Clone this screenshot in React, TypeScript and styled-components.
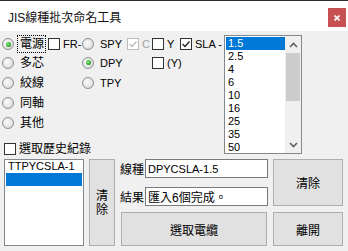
import React from 'react';
import styled, { createGlobalStyle } from 'styled-components';

const GlobalStyle = createGlobalStyle`
  html, body {
    margin: 0;
    padding: 0;
    background: #f0f0f0;
  }
  body {
    font-family: "Liberation Sans", "Noto Sans CJK TC", sans-serif;
    font-size: 11px;
    color: #000;
  }
`;

const sizes = ['1.5', '2.5', '4', '6', '10', '16', '25', '35', '50'];

export default function App() {
  return (
    <>
      <GlobalStyle />
      <Window>
        <TitleBar>
          <Title>JIS線種批次命名工具</Title>
          <CloseButton>
            <svg width="6" height="6" viewBox="0 0 6 6">
              <path d="M0.5 0.5 L5.5 5.5 M5.5 0.5 L0.5 5.5" stroke="#fff" strokeWidth="1.6" />
            </svg>
          </CloseButton>
        </TitleBar>

        <Body>
          <TopRow>
            <LeftColumn>
              <OptionGrid>
                <Cell $col={1} $row={1}><Radio label="電源" checked focused zh /></Cell>
                <Cell $col={2} $row={1}><Check label="FR-" /></Cell>
                <Cell $col={3} $row={1}><Radio label="SPY" /></Cell>
                <Cell $col={4} $row={1}><Check label="C" checked disabled /></Cell>
                <Cell $col={5} $row={1}><Check label="Y" /></Cell>
                <Cell $col={6} $row={1}><Check label="SLA -" checked /></Cell>

                <Cell $col={1} $row={2}><Radio label="多芯" zh /></Cell>
                <Cell $col={3} $row={2}><Radio label="DPY" checked /></Cell>
                <Cell $col={5} $row={2}><Check label="(Y)" /></Cell>

                <Cell $col={1} $row={3}><Radio label="絞線" zh /></Cell>
                <Cell $col={3} $row={3}><Radio label="TPY" /></Cell>

                <Cell $col={1} $row={4}><Radio label="同軸" zh /></Cell>
                <Cell $col={1} $row={5}><Radio label="其他" zh /></Cell>
              </OptionGrid>
              <HistoryToggle>
                <Check label="選取歷史紀錄" zh />
              </HistoryToggle>
            </LeftColumn>

            <SizeList>
              <SizeItems>
                {sizes.map((s, i) => (
                  <ListItem key={s} $selected={i === 0}>{s}</ListItem>
                ))}
              </SizeItems>
              <ScrollBar>
                <ScrollArrow>
                  <svg width="9" height="6" viewBox="0 0 9 6">
                    <path d="M1 5 L4.5 1.5 L8 5" stroke="#606060" strokeWidth="1.6" fill="none" />
                  </svg>
                </ScrollArrow>
                <ScrollThumb />
                <ScrollTrack />
                <ScrollArrow>
                  <svg width="9" height="6" viewBox="0 0 9 6">
                    <path d="M1 1 L4.5 4.5 L8 1" stroke="#606060" strokeWidth="1.6" fill="none" />
                  </svg>
                </ScrollArrow>
              </ScrollBar>
            </SizeList>
          </TopRow>

          <BottomRow>
            <HistoryList>
              <ListItem>TTPYCSLA-1</ListItem>
              <ListItem $selected />
            </HistoryList>
            <VerticalButton>清<br />除</VerticalButton>

            <RightPanel>
              <FieldsRow>
                <Fields>
                  <Field>
                    <FieldLabel>線種</FieldLabel>
                    <TextBox>DPYCSLA-1.5</TextBox>
                  </Field>
                  <Field>
                    <FieldLabel>結果</FieldLabel>
                    <TextBox><Zh>匯入6個完成。</Zh></TextBox>
                  </Field>
                </Fields>
                <ClearButton><Zh>清除</Zh></ClearButton>
              </FieldsRow>
              <ActionsRow>
                <SelectButton><Zh>選取電纜</Zh></SelectButton>
                <ExitButton><Zh>離開</Zh></ExitButton>
              </ActionsRow>
            </RightPanel>
          </BottomRow>
        </Body>
      </Window>
    </>
  );
}

const Radio = ({ label, checked, focused, zh }: { label: string; checked?: boolean; focused?: boolean; zh?: boolean }) => (
  <Option $gap={focused ? 4 : 6}>
    <RadioDot $checked={checked} />
    <OptionText $focused={focused} $zh={zh}>{label}</OptionText>
  </Option>
);

const Check = ({ label, checked, disabled, zh }: { label: string; checked?: boolean; disabled?: boolean; zh?: boolean }) => (
  <Option $gap={3}>
    <CheckBox $disabled={disabled}>
      {checked && (
        <svg width="10" height="10" viewBox="0 0 10 10">
          <path d="M1.5 5 L4 7.5 L8.5 2.5" stroke={disabled ? '#bcbcbc' : '#222'} strokeWidth="1.3" fill="none" />
        </svg>
      )}
    </CheckBox>
    <OptionText $zh={zh} $disabled={disabled}>{label}</OptionText>
  </Option>
);

const Window = styled.div`
  width: 348px;
  height: 251px;
  display: flex;
  flex-direction: column;
  overflow: hidden;
  background: #f0f0f0;
`;

const TitleBar = styled.div`
  height: 31px;
  box-sizing: border-box;
  border-top: 1px solid #2b2b2b;
  background: #fff;
  display: flex;
  align-items: center;
  justify-content: space-between;
  padding-left: 8px;
`;

const Title = styled.div`
  font-size: 12px;
  color: #111;
`;

const CloseButton = styled.div`
  align-self: flex-start;
  margin-top: 7px;
  margin-right: 2px;
  width: 18px;
  height: 19px;
  background: #c75050;
  display: flex;
  align-items: center;
  justify-content: center;
`;

const Body = styled.div`
  display: flex;
  flex-direction: column;
  padding-top: 4px;
`;

const TopRow = styled.div`
  display: flex;
  height: 121px;
`;

const LeftColumn = styled.div`
  width: 224px;
  display: flex;
  flex-direction: column;
`;

const OptionGrid = styled.div`
  margin-left: 2px;
  display: grid;
  grid-template-columns: 46px 34px 45px 25px 28px 44px;
  grid-template-rows: 18px 19px 21px 20px 19px;
`;

const Cell = styled.div<{ $col: number; $row: number }>`
  grid-column: ${p => p.$col};
  grid-row: ${p => p.$row};
  display: flex;
  align-items: center;
  white-space: nowrap;
`;

const Option = styled.div<{ $gap: number }>`
  display: flex;
  align-items: center;
  gap: ${p => p.$gap}px;
`;

const OptionText = styled.span<{ $focused?: boolean; $zh?: boolean; $disabled?: boolean }>`
  font-size: ${p => (p.$zh ? 12 : 11)}px;
  line-height: 14px;
  color: ${p => (p.$disabled ? '#a0a0a0' : '#000')};
  padding: ${p => (p.$focused ? '1px 1px 1px 2px' : '0')};
  outline: ${p => (p.$focused ? '1px dotted #000' : 'none')};
`;

const RadioDot = styled.span<{ $checked?: boolean }>`
  width: 12px;
  height: 12px;
  box-sizing: border-box;
  border-radius: 50%;
  border: 1px solid #8c9094;
  background: radial-gradient(circle at 40% 40%, #fbfbfb 0%, #e6e6e6 55%, #c9c9c9 100%);
  display: flex;
  align-items: center;
  justify-content: center;
  flex-shrink: 0;

  &::after {
    content: '';
    display: ${p => (p.$checked ? 'block' : 'none')};
    width: 5px;
    height: 5px;
    border-radius: 50%;
    background: radial-gradient(circle at 40% 40%, #8ff07f 0%, #2fa52a 60%, #1a6f17 100%);
  }
`;

const CheckBox = styled.span<{ $disabled?: boolean }>`
  width: 12px;
  height: 12px;
  box-sizing: border-box;
  border: 1px solid ${p => (p.$disabled ? '#bcbcbc' : '#333')};
  background: #fff;
  display: flex;
  align-items: center;
  justify-content: center;
  flex-shrink: 0;
`;

const HistoryToggle = styled.div`
  margin: 10px 0 0 4px;
  height: 14px;
  display: flex;
  align-items: center;
`;

const SizeList = styled.div`
  width: 78px;
  height: 119px;
  box-sizing: border-box;
  border: 1px solid #828790;
  background: #fff;
  display: flex;
  overflow: hidden;
`;

const SizeItems = styled.div`
  width: 60px;
  box-sizing: border-box;
  padding: 1px 0 0 1px;
  display: flex;
  flex-direction: column;
`;

const ListItem = styled.div<{ $selected?: boolean }>`
  height: 13px;
  line-height: 13px;
  flex-shrink: 0;
  padding-left: 2px;
  white-space: nowrap;
  background: ${p => (p.$selected ? '#0078d7' : 'transparent')};
  color: ${p => (p.$selected ? '#fff' : '#000')};
`;

const ScrollBar = styled.div`
  width: 16px;
  background: #f0f0f0;
  display: flex;
  flex-direction: column;
`;

const ScrollArrow = styled.div`
  height: 17px;
  display: flex;
  align-items: center;
  justify-content: center;
`;

const ScrollThumb = styled.div`
  height: 48px;
  margin: 0 1px;
  background: #cdcdcd;
`;

const ScrollTrack = styled.div`
  flex: 1;
`;

const BottomRow = styled.div`
  display: flex;
  margin-top: 3px;
  height: 87px;
`;

const HistoryList = styled.div`
  width: 80px;
  margin-left: 4px;
  box-sizing: border-box;
  border: 1px solid #828790;
  background: #fff;
  padding: 0 1px;
  display: flex;
  flex-direction: column;
`;

const Button = styled.div`
  box-sizing: border-box;
  border: 1px solid #adadad;
  background: #e1e1e1;
  display: flex;
  align-items: center;
  justify-content: center;
  text-align: center;
  font-size: 12px;
`;

const VerticalButton = styled(Button)`
  width: 26px;
  margin-left: 5px;
  line-height: 14px;
`;

const RightPanel = styled.div`
  margin-left: 5px;
  display: flex;
  flex-direction: column;
`;

const FieldsRow = styled.div`
  display: flex;
  height: 47px;
`;

const Fields = styled.div`
  width: 148px;
  display: flex;
  flex-direction: column;
  justify-content: space-between;
`;

const Field = styled.div`
  display: flex;
  align-items: center;
  height: 19px;
`;

const FieldLabel = styled.span`
  width: 25px;
  font-size: 12px;
`;

const TextBox = styled.div`
  width: 123px;
  height: 19px;
  box-sizing: border-box;
  border: 1px solid #7a7a7a;
  background: #fff;
  padding-left: 2px;
  display: flex;
  align-items: center;
  white-space: nowrap;
  overflow: hidden;
`;

const ClearButton = styled(Button)`
  width: 70px;
  margin-left: 5px;
`;

const ActionsRow = styled.div`
  display: flex;
  margin-top: 6px;
  height: 34px;
`;

const SelectButton = styled(Button)`
  width: 146px;
  margin-left: 1px;
`;

const ExitButton = styled(Button)`
  width: 70px;
  margin-left: 6px;
`;

const Zh = styled.span`
  font-size: 12px;
`;
